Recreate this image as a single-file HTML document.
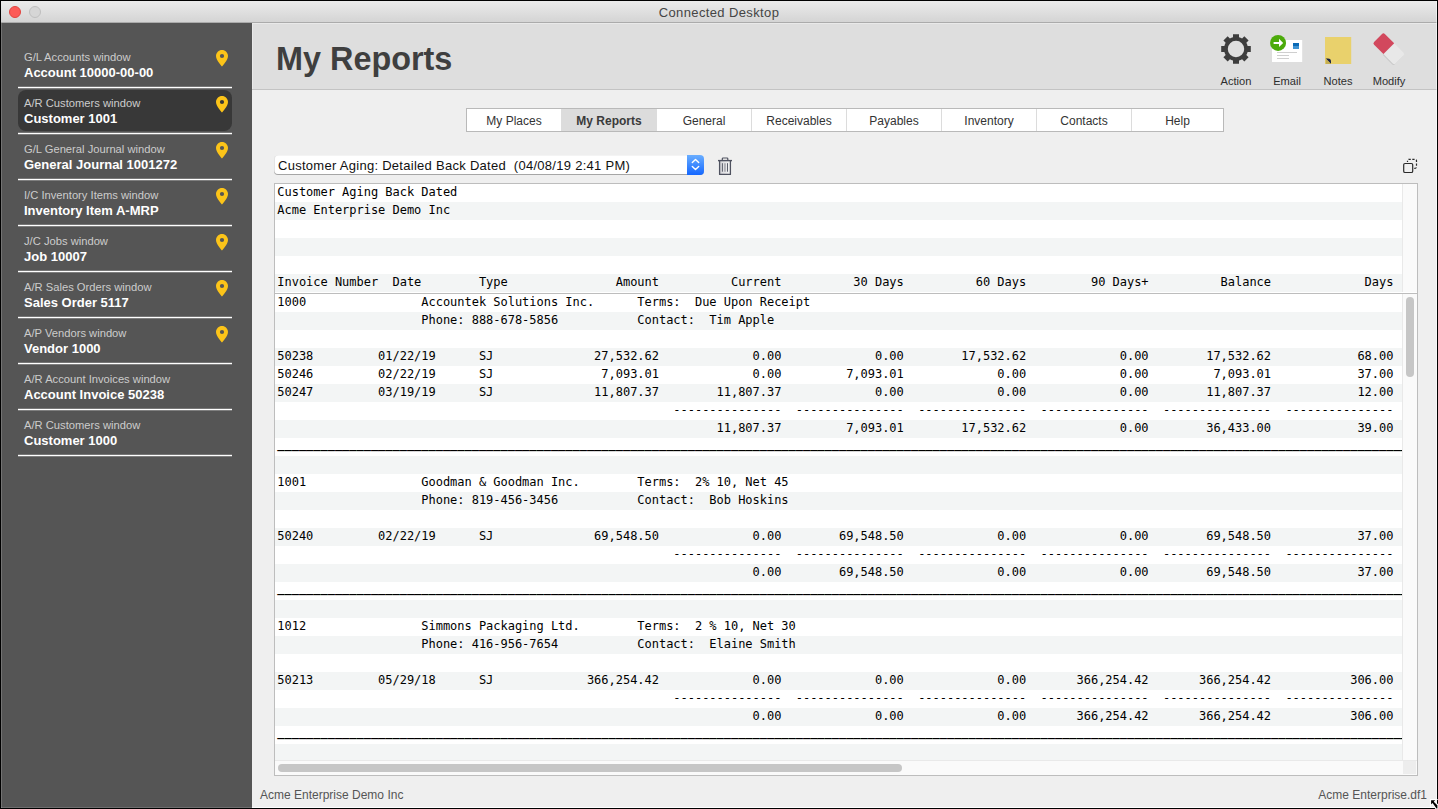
<!DOCTYPE html>
<html lang="en">
<head>
<meta charset="utf-8">
<title>Connected Desktop</title>
<style>
html,body{margin:0;padding:0;}
body{width:1438px;height:809px;overflow:hidden;background:#000;position:relative;
 font-family:"Liberation Sans",Arial,Helvetica,sans-serif;color:#333;}
.abs{position:absolute;}
#win{position:absolute;left:1px;top:1px;width:1436px;height:807px;background:#efefef;overflow:hidden;}
/* coordinates inside #win are page coords minus 1 */
#titlebar{position:absolute;left:0;top:0;width:1436px;height:21px;
 background:linear-gradient(#ebebeb,#d4d4d4);border-bottom:1px solid #ababab;}
#titlebar .t{position:absolute;left:0;right:0;top:4px;text-align:center;font-size:13px;line-height:16px;color:#454545;letter-spacing:0.38px;}
.dot{position:absolute;top:5px;width:12px;height:12px;border-radius:50%;box-sizing:border-box;}
#sidebar{position:absolute;left:0;top:22px;width:251px;height:785px;background:#555;}
.item{position:absolute;left:17px;width:214px;height:46px;}
.item .a{position:absolute;left:6px;top:8px;font-size:11.2px;line-height:13px;color:#ccc;white-space:nowrap;}
.item .b{position:absolute;left:6px;top:22px;font-size:13px;line-height:16px;color:#fff;font-weight:bold;white-space:nowrap;}
.item .ln{position:absolute;left:0;top:44px;width:214px;height:1px;background:#fff;box-shadow:0 1px 0 rgba(255,255,255,.25),0 -1px 0 rgba(255,255,255,.2);}
.item .sel{position:absolute;left:0;top:1px;width:214px;height:41px;border-radius:8px;background:#383838;}
.item svg{position:absolute;left:198px;top:7px;}
#header{position:absolute;left:251px;top:22px;width:1185px;height:66px;background:#dedede;border-bottom:1px solid #c3c3c3;
 box-shadow:inset 1px 1px 0 #e9e9e9;}
#h1{position:absolute;left:275px;top:38px;font-size:32.4px;line-height:40px;font-weight:bold;color:#3f3f3f;white-space:nowrap;}
.tl{position:absolute;top:74px;width:60px;text-align:center;font-size:11.1px;line-height:13px;color:#2d2d2d;}
#tabs{position:absolute;left:465px;top:107px;width:758px;height:24px;box-sizing:border-box;border:1px solid #b9b9b9;background:#fff;}
.tab{position:absolute;top:0;height:22px;line-height:25px;font-size:12px;text-align:center;color:#333;box-sizing:border-box;border-left:1px solid #dcdcdc;}
.tab.first{border-left:0;}
.tab.on{background:#dcdcdc;color:#3a3a3a;font-weight:bold;border-left:0;}
#dd{position:absolute;left:273px;top:154px;width:430px;height:20px;background:#fff;border-radius:4px;
 box-shadow:inset 0 -1px 0 #a6a6a6, inset 1px 0 0 #e4e4e4, inset 0 1px 0 #f4f4f4;overflow:hidden;}
#dd .tx{position:absolute;left:4px;top:2.6px;font-size:13px;line-height:16px;color:#111;white-space:pre;letter-spacing:0.28px;}
#dd .st{position:absolute;right:0;top:0;width:17px;height:20px;background:linear-gradient(#6aaeff,#1467ff);}
.box{position:absolute;left:273px;width:1144px;box-sizing:border-box;border:1px solid #bdbdbd;background:#fff;overflow:hidden;}
.mono{position:absolute;left:0;top:0;width:1127px;overflow:hidden;
 font-family:"DejaVu Sans Mono","Liberation Mono",monospace;font-size:12px;letter-spacing:-0.024px;color:#000;}
.r{height:18px;line-height:16px;white-space:pre;padding-left:2.3px;overflow:hidden;}
.r:nth-child(even){background:#f3f5f5;}
.lg{position:relative;top:-2px;font-weight:bold;}
.vtrack{position:absolute;right:0;top:0;width:15px;background:#fafafa;border-left:1px solid #e9e9e9;box-sizing:border-box;}
#foot1{position:absolute;left:259px;top:787px;font-size:12px;line-height:14px;color:#555;white-space:nowrap;}
#foot2{position:absolute;right:10px;top:787px;font-size:12px;line-height:14px;color:#555;white-space:nowrap;}
</style>
</head>
<body>
<div id="win">
 <div id="titlebar">
  <div class="dot" style="left:8px;background:#fc5b57;border:1px solid #e2443f;"></div>
  <div class="dot" style="left:28px;background:#d6d6d6;border:1px solid #bfbfbf;"></div>
  <div class="t">Connected Desktop</div>
 </div>

 <div id="sidebar">
  <div class="item" style="top:20px;"><div class="a">G/L Accounts window</div><div class="b">Account 10000-00-00</div><svg width="12" height="17" viewBox="0 0 12 17"><path fill="#fcc419" fill-rule="evenodd" d="M6 0C2.7 0 0 2.7 0 6c0 4.2 6 10.6 6 10.6S12 10.200 12 6C12 2.700 9.300 0 6 0zM6 3.900a2.100 2.100 0 1 1 0 4.200a2.100 2.100 0 0 1 0-4.200z"/></svg><div class="ln"></div></div>
  <div class="item" style="top:66px;"><div class="sel"></div><div class="a">A/R Customers window</div><div class="b">Customer 1001</div><svg width="12" height="17" viewBox="0 0 12 17"><path fill="#fcc419" fill-rule="evenodd" d="M6 0C2.7 0 0 2.7 0 6c0 4.2 6 10.6 6 10.6S12 10.200 12 6C12 2.700 9.300 0 6 0zM6 3.900a2.100 2.100 0 1 1 0 4.200a2.100 2.100 0 0 1 0-4.200z"/></svg><div class="ln"></div></div>
  <div class="item" style="top:112px;"><div class="a">G/L General Journal window</div><div class="b">General Journal 1001272</div><svg width="12" height="17" viewBox="0 0 12 17"><path fill="#fcc419" fill-rule="evenodd" d="M6 0C2.7 0 0 2.7 0 6c0 4.2 6 10.6 6 10.6S12 10.200 12 6C12 2.700 9.300 0 6 0zM6 3.900a2.100 2.100 0 1 1 0 4.200a2.100 2.100 0 0 1 0-4.200z"/></svg><div class="ln"></div></div>
  <div class="item" style="top:158px;"><div class="a">I/C Inventory Items window</div><div class="b">Inventory Item A-MRP</div><svg width="12" height="17" viewBox="0 0 12 17"><path fill="#fcc419" fill-rule="evenodd" d="M6 0C2.7 0 0 2.7 0 6c0 4.2 6 10.6 6 10.6S12 10.200 12 6C12 2.700 9.300 0 6 0zM6 3.900a2.100 2.100 0 1 1 0 4.200a2.100 2.100 0 0 1 0-4.200z"/></svg><div class="ln"></div></div>
  <div class="item" style="top:204px;"><div class="a">J/C Jobs window</div><div class="b">Job 10007</div><svg width="12" height="17" viewBox="0 0 12 17"><path fill="#fcc419" fill-rule="evenodd" d="M6 0C2.7 0 0 2.7 0 6c0 4.2 6 10.6 6 10.6S12 10.200 12 6C12 2.700 9.300 0 6 0zM6 3.900a2.100 2.100 0 1 1 0 4.200a2.100 2.100 0 0 1 0-4.200z"/></svg><div class="ln"></div></div>
  <div class="item" style="top:250px;"><div class="a">A/R Sales Orders window</div><div class="b">Sales Order 5117</div><svg width="12" height="17" viewBox="0 0 12 17"><path fill="#fcc419" fill-rule="evenodd" d="M6 0C2.7 0 0 2.7 0 6c0 4.2 6 10.6 6 10.6S12 10.200 12 6C12 2.700 9.300 0 6 0zM6 3.900a2.100 2.100 0 1 1 0 4.200a2.100 2.100 0 0 1 0-4.200z"/></svg><div class="ln"></div></div>
  <div class="item" style="top:296px;"><div class="a">A/P Vendors window</div><div class="b">Vendor 1000</div><svg width="12" height="17" viewBox="0 0 12 17"><path fill="#fcc419" fill-rule="evenodd" d="M6 0C2.7 0 0 2.7 0 6c0 4.2 6 10.6 6 10.6S12 10.200 12 6C12 2.700 9.300 0 6 0zM6 3.900a2.100 2.100 0 1 1 0 4.200a2.100 2.100 0 0 1 0-4.200z"/></svg><div class="ln"></div></div>
  <div class="item" style="top:342px;"><div class="a">A/R Account Invoices window</div><div class="b">Account Invoice 50238</div><div class="ln"></div></div>
  <div class="item" style="top:388px;"><div class="a">A/R Customers window</div><div class="b">Customer 1000</div><div class="ln"></div></div>
 </div>

 <div id="header"></div>
 <div id="h1">My Reports</div>


 <div class="tl" style="left:1205px;">Action</div>
 <div class="tl" style="left:1256px;">Email</div>
 <div class="tl" style="left:1307px;">Notes</div>
 <div class="tl" style="left:1358px;">Modify</div>


 <div id="tabs">
  <div class="tab first" style="left:0;width:94px;">My Places</div>
  <div class="tab on" style="left:94px;width:96px;">My Reports</div>
  <div class="tab" style="left:190px;width:94px;border-left:0;">General</div>
  <div class="tab" style="left:284px;width:95px;">Receivables</div>
  <div class="tab" style="left:379px;width:95px;">Payables</div>
  <div class="tab" style="left:474px;width:95px;">Inventory</div>
  <div class="tab" style="left:569px;width:95px;">Contacts</div>
  <div class="tab" style="left:664px;width:92px;">Help</div>
 </div>

 <div id="dd">
  <div class="tx">Customer Aging: Detailed Back Dated  (04/08/19 2:41 PM)</div>
  <div class="st"><svg width="17" height="20" viewBox="0 0 17 20"><path d="M5.300 7.500L8.500 4.400L11.700 7.500M5.300 11.500L8.500 14.600L11.700 11.500" fill="none" stroke="#fff" stroke-width="1.400" stroke-linecap="round" stroke-linejoin="round"/></svg></div>
 </div>

<svg class="abs" style="left:-1px;top:-1px;" width="1438" height="809" viewBox="0 0 1438 809">
<path fill="#3d3d3d" fill-rule="evenodd" d="M1233.00 37.33L1233.00 34.15 L1239.00 34.15 L1239.00 37.33A12.00 12.00 0 0 1 1242.09 38.61L1244.34 36.36 L1248.59 40.61 L1246.34 42.86A12.00 12.00 0 0 1 1247.62 45.95L1250.80 45.95 L1250.80 51.95 L1247.62 51.95A12.00 12.00 0 0 1 1246.34 55.04L1248.59 57.29 L1244.34 61.54 L1242.09 59.29A12.00 12.00 0 0 1 1239.00 60.57L1239.00 63.75 L1233.00 63.75 L1233.00 60.57A12.00 12.00 0 0 1 1229.91 59.29L1227.66 61.54 L1223.41 57.29 L1225.66 55.04A12.00 12.00 0 0 1 1224.38 51.95L1221.20 51.95 L1221.20 45.95 L1224.38 45.95A12.00 12.00 0 0 1 1225.66 42.86L1223.41 40.61 L1227.66 36.36 L1229.91 38.61A12.00 12.00 0 0 1 1233.00 37.33ZM1227.80 48.95 A8.20 8.20 0 1 0 1244.20 48.95 A8.20 8.20 0 1 0 1227.80 48.95 Z"/>
<rect x="1272" y="40" width="30.200" height="22" fill="#fff"/>
<rect x="1293" y="43" width="6" height="3" fill="#0a6ab6"/><rect x="1293" y="46" width="6" height="3" fill="#3f93d2"/>
<rect x="1277" y="52" width="20" height="1" fill="#cfcfcf"/><rect x="1277" y="55" width="12" height="1" fill="#cfcfcf"/><rect x="1277" y="58" width="12" height="1" fill="#cfcfcf"/>
<circle cx="1278.050" cy="42.950" r="8" fill="#4cab0b"/>
<path d="M1273.600 41.950h5.400v-3.100l4.200 4.100l-4.200 4.100v-3.100h-5.400z" fill="#fff"/>
<rect x="1325" y="37" width="26.200" height="27" fill="#e9d16c"/>
<path d="M1325.700 58.500h2.300a3 3 0 0 1 3 3v2.400z" fill="#1c2447"/>
<path d="M1325.700 58.500l5.300 5.400h-5.300z" fill="#c4ae52"/>
<g transform="translate(1388.800 48.700) rotate(45)">
<path d="M0 -7.600h13.200a2 2 0 0 1 2 2v11.200a2 2 0 0 1 -2 2h-13.200z" fill="#c9c9c9" transform="translate(0 1.100)"/>
<path d="M0 -7.600h13.200a2 2 0 0 1 2 2v11.200a2 2 0 0 1 -2 2h-13.200z" fill="#e8e8e8"/>
<path d="M0 -7.600h-13.200a2 2 0 0 0 -2 2v11.200a2 2 0 0 0 2 2h13.200z" fill="#d2485d"/>
</g>
<defs><linearGradient id="tg" x1="0" x2="1" y1="0" y2="0"><stop offset="0" stop-color="#d4d4d8"/><stop offset="1" stop-color="#f6f6f6"/></linearGradient></defs>
<rect x="719.600" y="161" width="10.800" height="13.300" fill="url(#tg)"/>
<path d="M719.600 161v13.400h10.800v-13.400" fill="none" stroke="#4f5260" stroke-width="1.300" stroke-linejoin="round"/>
<path d="M718 160.600h14" stroke="#4f5260" stroke-width="1.400"/>
<path d="M722.300 160.300v-1.500a0.800 0.800 0 0 1 0.800 -0.800h3.900a0.800 0.800 0 0 1 0.800 0.800v1.500" fill="none" stroke="#4f5260" stroke-width="1.200"/>
<path d="M722.400 163.200v8.500M727.500 163.200v8.500" stroke="#5a5d6a" stroke-width="1"/>
<path d="M724.950 163.200v8.500" stroke="#a2a2aa" stroke-width="1.500"/>
<rect x="1403.700" y="163.500" width="9" height="9" rx="1.300" fill="none" stroke="#2a2a2a" stroke-width="1.200"/>
<path d="M1407.500 162v-1.200a1.500 1.500 0 0 1 1.500 -1.500h6a1.500 1.500 0 0 1 1.500 1.500v6a1.500 1.500 0 0 1 -1.500 1.500h-1" fill="none" stroke="#2a2a2a" stroke-width="1.200" stroke-dasharray="2.300 1.500" stroke-dashoffset="1"/>
</svg>


 <div class="box" style="top:182px;height:110px;border-bottom:0;">
  <div class="mono">
<div class="r">Customer Aging Back Dated</div>
<div class="r">Acme Enterprise Demo Inc</div>
<div class="r"></div>
<div class="r"></div>
<div class="r"></div>
<div class="r">Invoice Number  Date        Type               Amount          Current          30 Days          60 Days         90 Days+          Balance             Days</div>
  </div>
  <div class="vtrack" style="height:108px;"></div>
 </div>
 <div class="box" style="top:292px;height:483px;">
  <div class="mono" style="height:466px;">
<div class="r">1000                Accountek Solutions Inc.      Terms:  Due Upon Receipt</div>
<div class="r">                    Phone: 888-678-5856           Contact:  Tim Apple</div>
<div class="r"></div>
<div class="r">50238         01/22/19      SJ              27,532.62             0.00             0.00        17,532.62             0.00        17,532.62            68.00</div>
<div class="r">50246         02/22/19      SJ               7,093.01             0.00         7,093.01             0.00             0.00         7,093.01            37.00</div>
<div class="r">50247         03/19/19      SJ              11,807.37        11,807.37             0.00             0.00             0.00        11,807.37            12.00</div>
<div class="r">                                                       ---------------  ---------------  ---------------  ---------------  ---------------  ---------------</div>
<div class="r">                                                             11,807.37         7,093.01        17,532.62             0.00        36,433.00            39.00</div>
<div class="r"><span class="lg">________________________________________________________________________________________________________________________________________________________________</span></div>
<div class="r"></div>
<div class="r">1001                Goodman &amp; Goodman Inc.        Terms:  2% 10, Net 45</div>
<div class="r">                    Phone: 819-456-3456           Contact:  Bob Hoskins</div>
<div class="r"></div>
<div class="r">50240         02/22/19      SJ              69,548.50             0.00        69,548.50             0.00             0.00        69,548.50            37.00</div>
<div class="r">                                                       ---------------  ---------------  ---------------  ---------------  ---------------  ---------------</div>
<div class="r">                                                                  0.00        69,548.50             0.00             0.00        69,548.50            37.00</div>
<div class="r"><span class="lg">________________________________________________________________________________________________________________________________________________________________</span></div>
<div class="r"></div>
<div class="r">1012                Simmons Packaging Ltd.        Terms:  2 % 10, Net 30</div>
<div class="r">                    Phone: 416-956-7654           Contact:  Elaine Smith</div>
<div class="r"></div>
<div class="r">50213         05/29/18      SJ             366,254.42             0.00             0.00             0.00       366,254.42       366,254.42           306.00</div>
<div class="r">                                                       ---------------  ---------------  ---------------  ---------------  ---------------  ---------------</div>
<div class="r">                                                                  0.00             0.00             0.00       366,254.42       366,254.42           306.00</div>
<div class="r"><span class="lg">________________________________________________________________________________________________________________________________________________________________</span></div>
<div class="r"></div>
  </div>
  <div class="vtrack" style="height:466px;"><div class="abs" style="left:3px;top:3px;width:8px;height:80px;border-radius:4px;background:#c6c6c6;"></div></div>
  <div class="abs" style="left:0;top:466px;width:1142px;height:15px;background:#fafafa;border-top:1px solid #e9e9e9;box-sizing:border-box;">
    <div class="abs" style="left:3px;top:3px;width:624px;height:8px;border-radius:4px;background:#c6c6c6;"></div>
    <div class="abs" style="left:1128px;top:0;width:13px;height:13px;background:#ededed;"></div>
  </div>
 </div>

 <div id="foot1">Acme Enterprise Demo Inc</div>
 <div id="foot2">Acme Enterprise.df1</div>
 <div class="abs" style="left:0;top:22px;width:1px;height:785px;background:rgba(255,255,255,.18);"></div>
 <div class="abs" style="left:0;top:806px;width:251px;height:1px;background:rgba(255,255,255,.15);"></div>
 <div class="abs" style="left:251px;top:806px;width:1185px;height:1px;background:rgba(255,255,255,.9);"></div>
 <div class="abs" style="left:1435px;top:0;width:1px;height:807px;background:rgba(255,255,255,.5);"></div>
</div>
<svg class="abs" style="left:1426px;top:796px;" width="12" height="13" viewBox="0 0 12 13"><path d="M4.500 3.700h6.200l-2.100 2.100l3.400 3.400v3.800h-1.800l-3.700 -5.100l-2 2z" fill="#000" stroke="#fff" stroke-width="1.200"/></svg>
</body>
</html>
